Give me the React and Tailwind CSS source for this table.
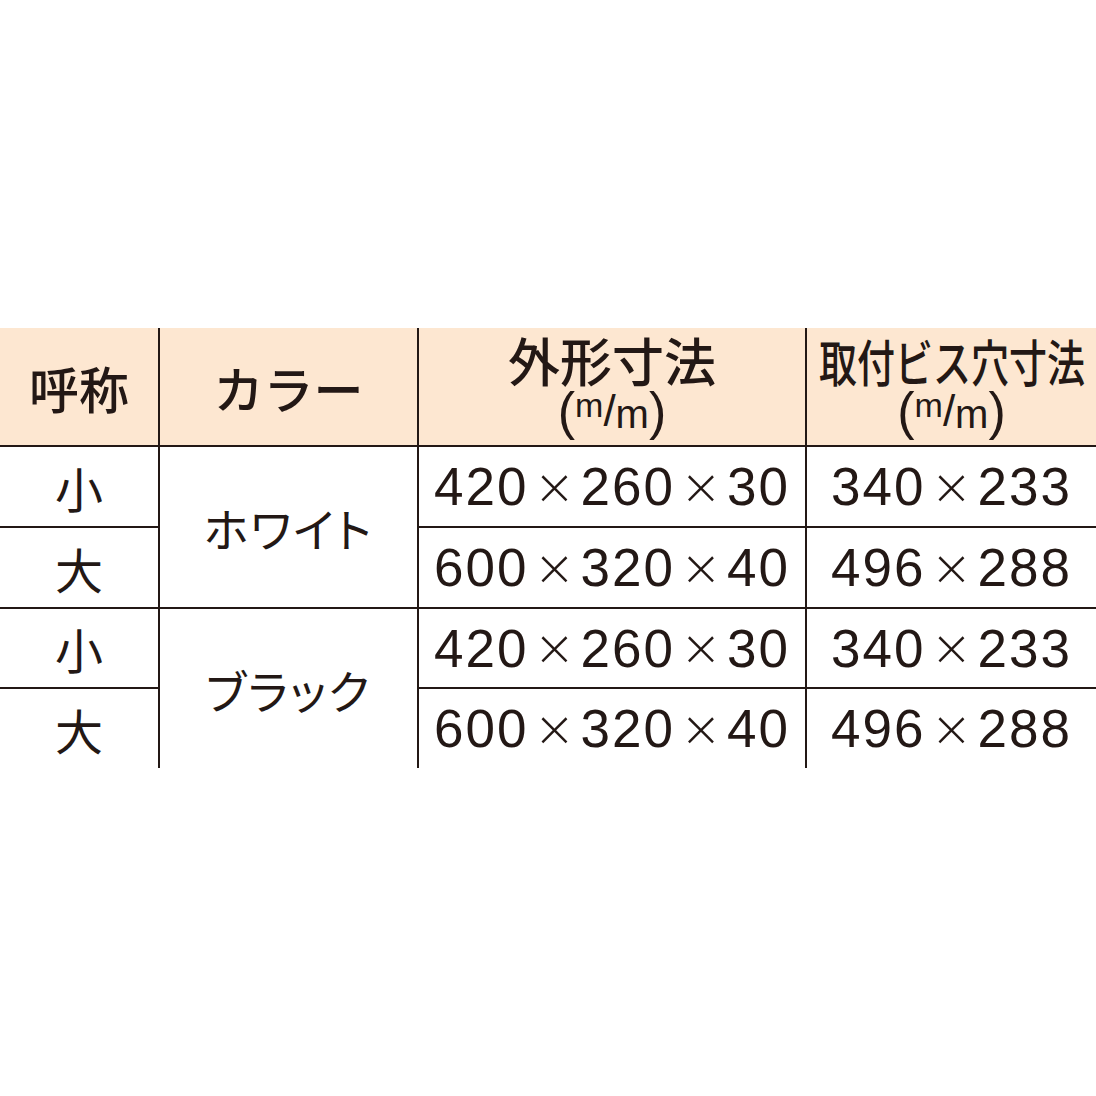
const rows = [
  { size: "小", dims: ["420", "260", "30"], hole: ["340", "233"] },
  { size: "大", dims: ["600", "320", "40"], hole: ["496", "288"] },
  { size: "小", dims: ["420", "260", "30"], hole: ["340", "233"] },
  { size: "大", dims: ["600", "320", "40"], hole: ["496", "288"] },
];

const jp = "font-['Noto_Sans_CJK_JP',sans-serif]";
const line = "border-[#231815]";

// numbers joined with a wide, thin ×
function Dim({ parts }) {
  return (
    <span className="inline-flex items-center font-['Liberation_Sans',Arial,sans-serif] text-[53px] leading-none tracking-[2px] text-[#231815]">
      {parts.map((p, i) => (
        <span key={i} className="inline-flex items-center">
          {i > 0 && (
            <span className="inline-block w-[52px] text-center font-['DejaVu_Sans',sans-serif] text-[50px] font-extralight tracking-normal">
              ×
            </span>
          )}
          <span>{p}</span>
        </span>
      ))}
    </span>
  );
}

function Unit() {
  return (
    <div className="flex h-[50px] items-center justify-center font-['Liberation_Sans',Arial,sans-serif] leading-none text-[#231815]">
      <span className="text-[52px]">(</span>
      <span className="text-[34px] self-start mt-[2px]">m</span>
      <span className="text-[44px]">/</span>
      <span className="text-[40px] self-end mb-[2px]">m</span>
      <span className="text-[52px]">)</span>
    </div>
  );
}

export default function App() {
  return (
    <div className="w-[1096px] h-[1096px] bg-white pt-[328px]">
      <div className="grid grid-cols-[160px_259px_388px_289px] grid-rows-[119px_81px_81px_80px_79px] text-[#231815]">
        {/* header */}
        <div className={`bg-[#fde7d1] border-r-2 border-b-2 ${line} flex items-center justify-center`}>
          <span className={`${jp} font-medium text-[50px] leading-none`}>呼称</span>
        </div>
        <div className={`bg-[#fde7d1] border-r-2 border-b-2 ${line} flex items-center justify-center`}>
          <span className={`${jp} font-medium text-[50px] leading-none`}>カラー</span>
        </div>
        <div className={`bg-[#fde7d1] border-r-2 border-b-2 ${line} flex flex-col items-center justify-center pb-[4px]`}>
          <span className={`${jp} font-medium text-[52px] leading-[52px]`}>外形寸法</span>
          <Unit />
        </div>
        <div className={`bg-[#fde7d1] border-b-2 ${line} flex flex-col items-center justify-center pb-[4px]`}>
          <span className={`${jp} font-medium text-[50px] leading-[52px] inline-block scale-x-[0.76] whitespace-nowrap`}>
            取付ビス穴寸法
          </span>
          <Unit />
        </div>

        {rows.map((r, i) => {
          const last = i === rows.length - 1;
          const bottom = last ? "" : "border-b-2";
          return [
            <div
              key={`s${i}`}
              className={`border-r-2 ${bottom} ${line} flex items-center justify-center col-start-1`}
              style={{ gridRow: i + 2 }}
            >
              <span className={`${jp} text-[48px] leading-none`}>{r.size}</span>
            </div>,
            i % 2 === 0 && (
              <div
                key={`c${i}`}
                className={`border-r-2 ${i === 0 ? "border-b-2" : ""} ${line} col-start-2 flex items-center justify-center`}
                style={{ gridRow: `${i + 2} / span 2` }}
              >
                <span className={`${jp} text-[46px] leading-none [font-feature-settings:'palt'] tracking-[2px]`}>
                  {i === 0 ? "ホワイト" : "ブラック"}
                </span>
              </div>
            ),
            <div
              key={`d${i}`}
              className={`border-r-2 ${bottom} ${line} col-start-3 flex items-center justify-center`}
              style={{ gridRow: i + 2 }}
            >
              <Dim parts={r.dims} />
            </div>,
            <div
              key={`h${i}`}
              className={`${bottom} ${line} col-start-4 flex items-center justify-center`}
              style={{ gridRow: i + 2 }}
            >
              <Dim parts={r.hole} />
            </div>,
          ];
        })}
      </div>
    </div>
  );
}
